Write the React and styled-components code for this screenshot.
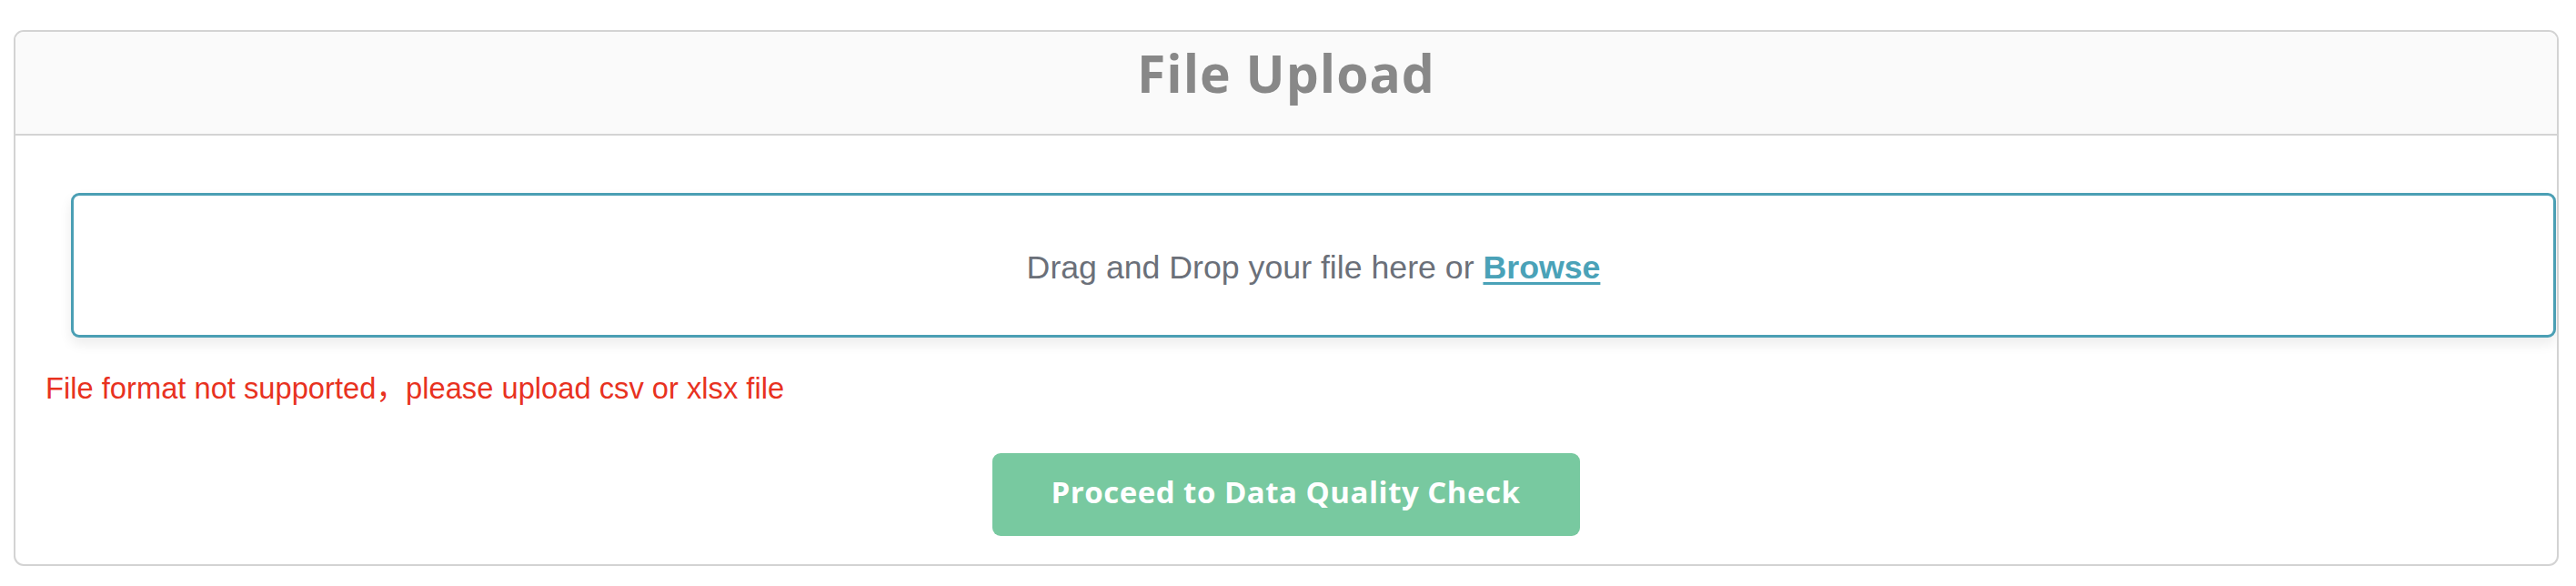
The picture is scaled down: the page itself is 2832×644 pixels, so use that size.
import React from 'react';
import styled, { createGlobalStyle } from 'styled-components';

const GlobalStyle = createGlobalStyle`
  html, body {
    margin: 0;
    padding: 0;
    background: #ffffff;
  }
  * {
    box-sizing: border-box;
  }
`;

const Page = styled.div`
  padding: 33px 19px 22px 15px;
`;

const Card = styled.section`
  border: 2px solid #d3d3d3;
  border-radius: 11px;
  overflow: hidden;
  background: #ffffff;
`;

const Header = styled.header`
  background: #fafafa;
  border-bottom: 2px solid #d3d3d3;
  padding: 5px 0 27px;
  text-align: center;
`;

const Title = styled.h1`
  margin: 0;
  font-family: 'Open Sans', 'Liberation Sans', sans-serif;
  font-weight: 700;
  font-size: 57px;
  line-height: 80px;
  letter-spacing: 1px;
  color: #888888;
`;

const Body = styled.div`
  padding: 63px 1px 31px 0;
  display: flex;
  flex-direction: column;
`;

const DropZone = styled.div`
  margin-left: 61px;
  height: 159px;
  border: 3px solid #4b9fb4;
  border-radius: 9px;
  background: #ffffff;
  box-shadow: 0 7px 14px rgba(0, 0, 0, 0.08);
  display: flex;
  align-items: center;
  justify-content: center;
  padding-top: 6px;
  font-family: 'Liberation Sans', Arial, sans-serif;
  font-size: 35.7px;
  color: #6b7079;
`;

const BrowseLink = styled.a`
  color: #4aa2b8;
  font-weight: 700;
  text-decoration: underline;
  text-decoration-thickness: 3px;
  text-underline-offset: 4px;
  cursor: pointer;
`;

const ErrorText = styled.p`
  margin: 37px 0 0 33px;
  font-family: 'Liberation Sans', Arial, 'Noto Sans CJK SC', sans-serif;
  font-size: 32.7px;
  line-height: 38px;
  color: #e8321f;
`;

const ButtonRow = styled.div`
  display: flex;
  justify-content: center;
  margin-top: 52px;
`;

const ProceedButton = styled.button`
  width: 646px;
  height: 91px;
  border: none;
  border-radius: 9px;
  background: #78c9a0;
  color: #ffffff;
  font-family: 'Open Sans', 'Liberation Sans', sans-serif;
  font-weight: 700;
  font-size: 33px;
  letter-spacing: 0.5px;
  padding: 0 0 6px;
  cursor: pointer;
`;

export default function App() {
  return (
    <>
      <GlobalStyle />
      <Page>
        <Card>
          <Header>
            <Title>File Upload</Title>
          </Header>
          <Body>
            <DropZone>
              <span>
                Drag and Drop your file here or <BrowseLink>Browse</BrowseLink>
              </span>
            </DropZone>
            <ErrorText>File format not supported，please upload csv or xlsx file</ErrorText>
            <ButtonRow>
              <ProceedButton>Proceed to Data Quality Check</ProceedButton>
            </ButtonRow>
          </Body>
        </Card>
      </Page>
    </>
  );
}
